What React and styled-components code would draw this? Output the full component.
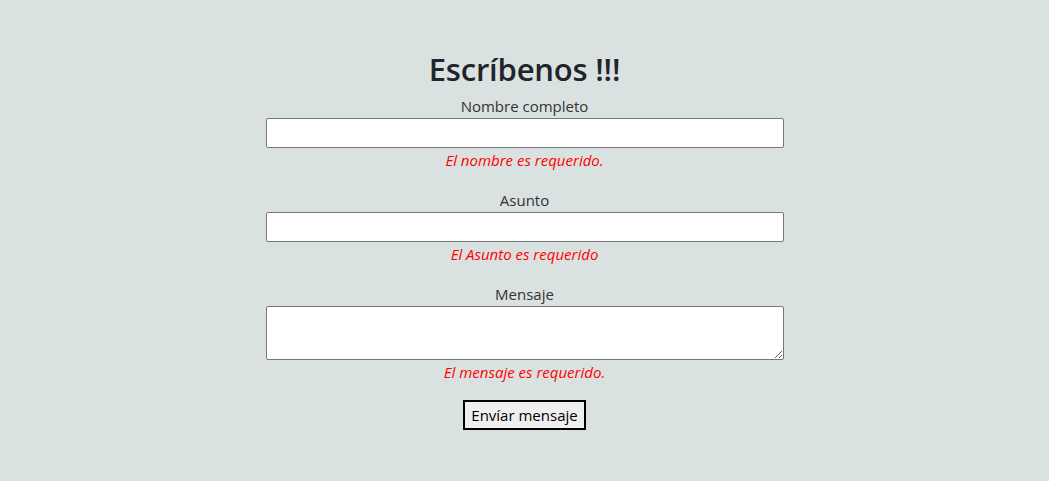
import styled, { createGlobalStyle } from "styled-components";

const GlobalStyle = createGlobalStyle`
  body {
    margin: 0;
    background: #dae2e1;
    font-family: "Open Sans", "Noto Sans", sans-serif;
    color: #212529;
  }
`;

export const Page = styled.div`
  min-height: 100vh;
  padding-top: 50px;
  box-sizing: border-box;
`;

export const Form = styled.form`
  width: 518px;
  margin: 0 auto;
  display: flex;
  flex-direction: column;
  align-items: center;
  text-align: center;
`;

export const Title = styled.h2`
  margin: 0 0 6px;
  font-size: 31px;
  line-height: 38px;
  font-weight: 600;
  letter-spacing: -0.2px;
`;

export const Field = styled.div`
  width: 100%;
  display: flex;
  flex-direction: column;
  margin-bottom: 18px;
`;

export const Label = styled.label`
  font-size: 15px;
  line-height: 24px;
  color: #333;
`;

export const Input = styled.input`
  box-sizing: border-box;
  width: 100%;
  height: ${(p) => (p.as === "textarea" ? "54px" : "30px")};
  border: 1px solid #767676;
  border-radius: 2px;
  background: #fff;
  font: inherit;
  resize: vertical;
  margin: 0;
`;

export const Error = styled.span`
  margin-top: 2px;
  font-size: 15px;
  line-height: 20px;
  font-style: italic;
  color: #ff0000;
`;

export const Submit = styled.button`
  box-sizing: border-box;
  height: 30px;
  padding: 0 6px;
  border: 2px solid #000;
  border-radius: 0;
  background: #efefef;
  font-family: inherit;
  font-size: 15px;
  color: #000;
`;

const fields = [
  { label: "Nombre completo", error: "El nombre es requerido." },
  { label: "Asunto", error: "El Asunto es requerido" },
  { label: "Mensaje", error: "El mensaje es requerido.", area: true },
];

const App = () => {
  return (
    <>
      <GlobalStyle />
      <Page>
        <Form onSubmit={(e) => e.preventDefault()}>
          <Title>Escríbenos !!!</Title>
          {fields.map((f) => (
            <Field key={f.label}>
              <Label>{f.label}</Label>
              {f.area ? <Input as="textarea" /> : <Input type="text" />}
              <Error>{f.error}</Error>
            </Field>
          ))}
          <Submit type="submit">Envíar mensaje</Submit>
        </Form>
      </Page>
    </>
  );
};

export default App;
